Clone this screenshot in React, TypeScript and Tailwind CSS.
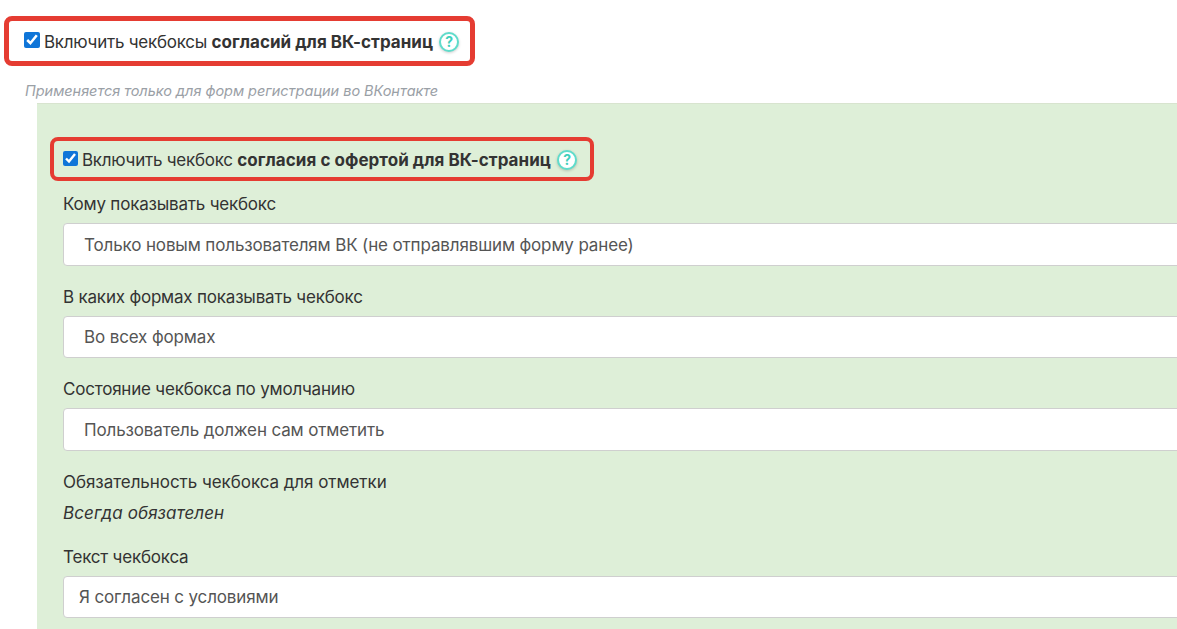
function HelpIcon() {
  return (
    <span className="mt-[2px] ml-[6px] flex h-[20px] w-[20px] items-center justify-center rounded-full border-2 border-[#5fdccb] bg-white text-[14px] leading-none font-bold text-[#3fcfbb] shadow-[0_1px_3px_rgba(0,0,0,0.2)]">
      ?
    </span>
  )
}

function CheckBox({ size }: { size: string }) {
  return <input type="checkbox" defaultChecked className={`m-0 mb-[2px] accent-[#0f75d8] ${size}`} />
}

function Field({ label, value, pad }: { label: string; value: string; pad: string }) {
  return (
    <div className="mb-[18px]">
      <div className="mb-[6px] h-[26px] text-[17px] leading-[26px] tracking-[-0.2px] text-[#333]">{label}</div>
      <div className={`flex h-[42.5px] items-center rounded-[4px] border border-[#cfcfcf] bg-white pt-[2px] text-[17px] tracking-[-0.14px] text-[#555] ${pad}`}>
        {value}
      </div>
    </div>
  )
}

export default function App() {
  return (
    <div className="h-[629px] w-[1177px] overflow-hidden bg-white font-['Inter',sans-serif]">
      {/* Top checkbox */}
      <div className="pt-[16px] pl-[4px]">
        <div className="flex h-[50px] w-[471px] items-center rounded-[8px] border-[5px] border-[#e53c32] pl-[15px] text-[17px] tracking-[-0.25px] text-[#333]">
          <CheckBox size="h-[16px] w-[16px]" />
          <span className="ml-[4px] pt-[3px]">
            Включить чекбоксы <b className="font-bold tracking-[0.03px]">согласий для ВК-страниц</b>
          </span>
          <HelpIcon />
        </div>
      </div>
      <p className="mt-[14px] ml-[25px] h-[22px] text-[14.5px] leading-[22px] tracking-[-0.03px] text-[#9aa0a6] italic">
        Применяется только для форм регистрации во ВКонтакте
      </p>

      {/* Green panel */}
      <div className="mt-[1px] ml-[37px] h-[560px] w-[1300px] border-t border-[#d8e4cf] bg-[#deefd8] pt-[33px] pl-[13px]">
        <div className="flex h-[44px] w-[544px] items-center rounded-[8px] border-[4px] border-[#e53c32] pl-[9px] text-[17px] tracking-[-0.25px] text-[#333]">
          <CheckBox size="h-[15px] w-[15px]" />
          <span className="ml-[4px] pt-[3px]">
            Включить чекбокс <b className="font-bold tracking-[0.05px]">согласия с офертой для ВК-страниц</b>
          </span>
          <HelpIcon />
        </div>
        <div className="mt-[10px] pl-[13px]">
          <Field label="Кому показывать чекбокс" value="Только новым пользователям ВК (не отправлявшим форму ранее)" pad="pl-[20px]" />
          <Field label="В каких формах показывать чекбокс" value="Во всех формах" pad="pl-[20px]" />
          <Field label="Состояние чекбокса по умолчанию" value="Пользователь должен сам отметить" pad="pl-[20px]" />
          <div className="mb-[5px] h-[26px] text-[17px] leading-[26px] tracking-[-0.05px] text-[#333]">Обязательность чекбокса для отметки</div>
          <div className="mb-[18px] h-[26px] text-[17px] leading-[26px] tracking-[0.1px] text-[#333] italic">Всегда обязателен</div>
          <Field label="Текст чекбокса" value="Я согласен с условиями" pad="pl-[15px]" />
        </div>
      </div>
    </div>
  )
}
